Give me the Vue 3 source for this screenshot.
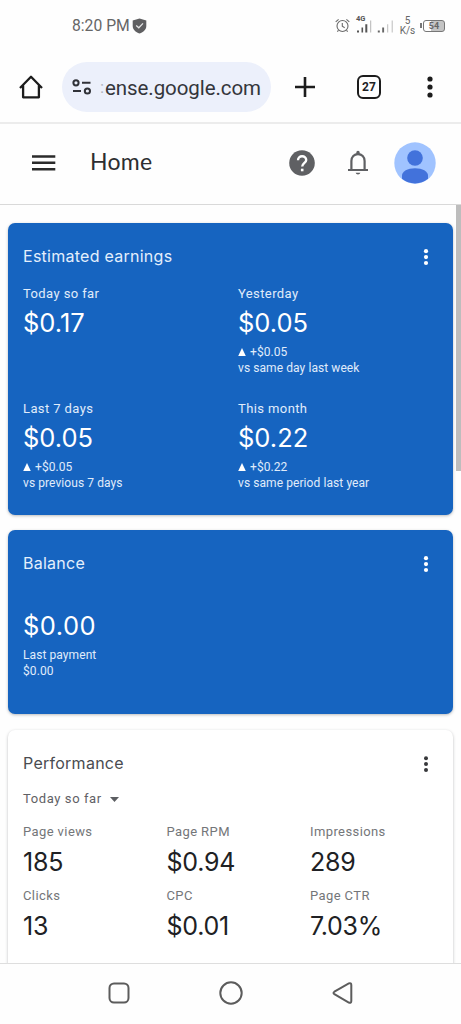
<script setup>
const earnings = [
  { label: 'Today so far', value: '$0.17' },
  { label: 'Yesterday', value: '$0.05', delta: '+$0.05', note: 'vs same day last week' },
  { label: 'Last 7 days', value: '$0.05', delta: '+$0.05', note: 'vs previous 7 days' },
  { label: 'This month', value: '$0.22', delta: '+$0.22', note: 'vs same period last year' },
]
const metrics = [
  { label: 'Page views', value: '185' },
  { label: 'Page RPM', value: '$0.94' },
  { label: 'Impressions', value: '289' },
  { label: 'Clicks', value: '13' },
  { label: 'CPC', value: '$0.01' },
  { label: 'Page CTR', value: '7.03%' },
]
</script>

<template>
  <div class="phone">
    <div class="status">
      <span class="clock">8:20 PM</span>
      <svg class="shield" width="15" height="16" viewBox="0 0 15 16">
        <path d="M7.5 0.5 L14.3 2.6 V8 C14.3 11.5 11.5 14 7.5 15.5 C3.5 14 .7 11.5 .7 8 V2.6 Z" fill="#5f5f61" />
        <path d="M4.2 7.4 L6.8 9.8 L11 5.4" fill="none" stroke="#e4e4e4" stroke-width="1.3" />
      </svg>
      <svg class="alarm" width="15" height="15" viewBox="0 0 15 15" fill="none" stroke="#6a6a6a" stroke-width="1.1">
        <circle cx="7.5" cy="8" r="5.5" />
        <path d="M7.3 5 V8.3 L9.7 9.7 M.7 3.8 L3.6 1.3 M14.3 3.8 L11.4 1.3 M3.5 12.3 L2.3 13.7 M11.5 12.3 L12.7 13.7" />
      </svg>
      <div class="cell">
        <span class="lte">4G</span>
        <svg width="18" height="13" viewBox="0 0 18 13">
          <path d="M1 10.5h2v2H1zM5.5 7.5h1.6v5H5.5zM9.3 4.2h2v8.3h-2z" fill="#555" />
          <path d="M14.2 .5h1v12h-1z" fill="#b5b5b5" />
        </svg>
      </div>
      <svg class="sim2" width="17" height="13" viewBox="0 0 17 13">
        <path d="M.8 10.5h2v2h-2zM5.2 7.5h1.9v5H5.2z" fill="#666" />
        <path d="M10.2 4.2h1v8.3h-1zM14.7 .5h1v12h-1z" fill="#bcbcbc" />
      </svg>
      <div class="speed"><span>5</span><span>K/s</span></div>
      <div class="battery"><i></i><b>54</b></div>
    </div>

    <div class="browser">
      <svg class="home" width="24" height="24" viewBox="0 0 24 24" fill="none" stroke="#1c1c1c" stroke-width="2.3" stroke-linejoin="round">
        <path d="M1 13 L12 1.8 L23 13 M4.1 10.5 V22.3 H19.9 V10.5" />
      </svg>
      <div class="url">
        <svg width="20" height="16" viewBox="0 0 20 16" fill="none" stroke="#303238" stroke-width="2">
          <circle cx="4" cy="3.8" r="2.6" />
          <path d="M10 3.8 H18.5 M1 12 H9" />
          <circle cx="15.4" cy="12" r="2.6" />
        </svg>
        <span class="cut">:</span><span class="host">ense.google.com</span>
      </div>
      <svg class="plus" width="22" height="22" viewBox="0 0 22 22" stroke="#1c1c1c" stroke-width="2.6">
        <path d="M1 11 H21 M11 1 V21" />
      </svg>
      <div class="tabs">27</div>
      <svg class="menu" width="6" height="22" viewBox="0 0 6 22" fill="#1c1c1c">
        <circle cx="3" cy="3" r="2.6" /><circle cx="3" cy="11" r="2.6" /><circle cx="3" cy="19" r="2.6" />
      </svg>
    </div>

    <header class="appbar">
      <svg class="burger" width="24" height="16" viewBox="0 0 24 16" stroke="#2b2b2b" stroke-width="2.5">
        <path d="M0 1.4 H23.3 M0 7.8 H23.3 M0 14.2 H23.3" />
      </svg>
      <span class="page">Home</span>
      <svg class="help" width="26" height="26" viewBox="0 0 26 26">
        <circle cx="13" cy="13" r="12.8" fill="#5f6063" />
        <path d="M9 10.2 C9 7.8 10.8 6.2 13.1 6.2 C15.5 6.2 17.2 7.8 17.2 9.9 C17.2 12.7 13.2 13 13.2 16.6" fill="none" stroke="#fff" stroke-width="2.4" />
        <path d="M11.9 18.7h2.6v2.6h-2.6z" fill="#fff" />
      </svg>
      <svg class="bell" width="22" height="26" viewBox="0 0 22 26">
        <path d="M1 20 H21 M4.4 20 V11 C4.4 7 7.2 4.1 11 4.1 C14.8 4.1 17.6 7 17.6 11 V20" fill="none" stroke="#5f6063" stroke-width="2.2" />
        <path d="M9.3 4.3 V2.5 a1.7 1.7 0 0 1 3.4 0 V4.3z M8.6 22.8 H13.4 A2.5 2.3 0 0 1 8.6 22.8z" fill="#5f6063" />
      </svg>
      <svg class="avatar" width="42" height="42" viewBox="0 0 42 42">
        <circle cx="21" cy="21" r="20.7" fill="#a0c3ff" />
        <circle cx="21" cy="16" r="7.8" fill="#4272db" />
        <path d="M8 36.8 V33.5 C8 29.5 13.5 26.3 21 26.3 C28.5 26.3 34 29.5 34 33.5 V36.8 A20.7 20.7 0 0 1 8 36.8z" fill="#4272db" />
      </svg>
    </header>

    <main class="content">
      <section class="card blue earnings">
        <div class="head">
          <h2>Estimated earnings</h2>
          <svg width="6" height="18" viewBox="0 0 6 18" fill="#fff"><circle cx="3" cy="3.2" r="2.1" /><circle cx="3" cy="9.1" r="2.1" /><circle cx="3" cy="15" r="2.1" /></svg>
        </div>
        <div class="stats">
          <div v-for="s in earnings" :key="s.label">
            <div class="label">{{ s.label }}</div>
            <div class="value">{{ s.value }}</div>
            <template v-if="s.delta">
              <div class="small delta">
                <svg width="8" height="9" viewBox="0 0 8 9"><path d="M4 0 L7.8 8 H.2z" fill="#fff" /></svg>{{ s.delta }}
              </div>
              <div class="small">{{ s.note }}</div>
            </template>
          </div>
        </div>
      </section>

      <section class="card blue balance">
        <div class="head">
          <h2>Balance</h2>
          <svg width="6" height="18" viewBox="0 0 6 18" fill="#fff"><circle cx="3" cy="3.2" r="2.1" /><circle cx="3" cy="9.1" r="2.1" /><circle cx="3" cy="15" r="2.1" /></svg>
        </div>
        <div class="value total">$0.00</div>
        <div class="small">Last payment</div>
        <div class="small">$0.00</div>
      </section>

      <section class="card perf">
        <div class="head">
          <h2>Performance</h2>
          <svg width="6" height="18" viewBox="0 0 6 18" fill="#37383b"><circle cx="3" cy="3.2" r="2" /><circle cx="3" cy="9.1" r="2" /><circle cx="3" cy="15" r="2" /></svg>
        </div>
        <div class="range">
          Today so far
          <svg width="9" height="5" viewBox="0 0 9 5"><path d="M0 0 H9 L4.5 5z" fill="#5c5e62" /></svg>
        </div>
        <div class="metrics">
          <div v-for="m in metrics" :key="m.label">
            <div class="label">{{ m.label }}</div>
            <div class="value">{{ m.value }}</div>
          </div>
        </div>
      </section>
      <div class="scrollbar"></div>
    </main>

    <nav class="sysnav">
      <svg width="22" height="22" viewBox="0 0 22 22"><rect x="1.5" y="1.5" width="19" height="19" rx="4.5" /></svg>
      <svg width="24" height="24" viewBox="0 0 24 24"><circle cx="12" cy="12" r="10.7" /></svg>
      <svg width="22" height="22" viewBox="0 0 22 22"><path d="M2.4 9.7 L16.8 1.4 Q19.3 .6 19.3 3 V19 Q19.3 21.4 16.8 20.5 L2.4 12.2 Q.6 10.95 2.4 9.7z" /></svg>
    </nav>
  </div>
</template>

<style>
body { margin: 0; background: #fff; }
</style>

<style scoped>
.phone {
  width: 461px;
  height: 1024px;
  display: flex;
  flex-direction: column;
  overflow: hidden;
  background: #fefefe;
  font-family: Roboto, "Liberation Sans", sans-serif;
  color: #202124;
}
svg { display: block; flex: none; }

.status {
  height: 51px;
  flex: none;
  display: flex;
  align-items: center;
  padding-left: 72px;
  color: #666;
}
.clock { width: 57px; margin-right: 3px; font-size: 15.7px; white-space: nowrap; }
.alarm { margin-left: 188px; }
.cell { position: relative; margin-left: 6px; padding-top: 1px; }
.lte { position: absolute; left: 0; top: -4px; font-size: 7.5px; line-height: 8px; font-weight: 700; color: #555; }
.sim2 { margin-left: 3px; margin-top: 1px; }
.speed {
  width: 17px;
  margin-left: 5px;
  display: flex;
  flex-direction: column;
  align-items: center;
  font-size: 10px;
  line-height: 10px;
}
.battery { display: flex; align-items: center; margin-left: 4px; }
.battery i { width: 2px; height: 5px; background: #777; margin-right: 1px; }
.battery b {
  box-sizing: border-box;
  width: 22px;
  height: 12px;
  border: 1px solid #777;
  border-radius: 3px;
  background: linear-gradient(90deg, #fff 35%, #c4c4c4 35%);
  font-size: 9px;
  line-height: 10px;
  text-align: center;
  color: #666;
}

.browser {
  box-sizing: border-box;
  height: 73px;
  flex: none;
  display: flex;
  align-items: center;
  padding-left: 19px;
  border-bottom: 2px solid #ececec;
}
.url {
  width: 209px;
  height: 50px;
  margin-left: 19px;
  border-radius: 25px;
  background: #ecf0fb;
  display: flex;
  align-items: center;
}
.url svg { margin-left: 10px; }
.cut { width: 5px; margin-left: 8px; font-size: 17px; color: #b0b4bd; overflow: hidden; }
.host { padding-top: 2px; font-size: 20.5px; letter-spacing: -0.08px; color: #34363b; white-space: nowrap; }
.plus { margin-left: 23px; }
.tabs {
  box-sizing: border-box;
  width: 24px;
  height: 24px;
  margin-left: 41px;
  border: 2.5px solid #1c1c1c;
  border-radius: 6px;
  font-size: 12px;
  font-weight: 700;
  line-height: 20px;
  text-align: center;
}
.menu { margin-left: 46px; }

.appbar {
  box-sizing: border-box;
  height: 81px;
  flex: none;
  display: flex;
  align-items: center;
  padding: 0 0 2px 32px;
  border-bottom: 1px solid #d9d9d9;
}
.page { width: 199px; margin-left: 34px; padding-bottom: 4px; font-family: Lato, sans-serif; font-size: 23px; letter-spacing: 0.3px; color: #2d2e31; }
.bell { margin-left: 32px; }
.avatar { margin-left: 25px; }

.content { position: relative; flex: 1; min-height: 0; overflow: hidden; padding: 18px 8px 0; }
.scrollbar { position: absolute; right: 0; top: 0; width: 5px; height: 266px; background: #bdbdbd; }
.card {
  box-sizing: border-box;
  padding: 22px 0 0 15px;
  width: 445px;
  border-radius: 7px;
  background: #fff;
  box-shadow: 0 1px 3px rgba(60, 64, 67, 0.35);
}
.blue { background: #1664c0; color: #fff; }
.earnings { height: 292px; }
.balance { height: 184px; margin-top: 15px; }
.perf { height: 300px; margin-top: 16px; }
.head { display: flex; align-items: center; justify-content: space-between; height: 24px; padding-right: 24px; }
h2 { margin: 0; padding-bottom: 2px; font-family: Inter, sans-serif; font-size: 16px; font-weight: 400; letter-spacing: 0.26px; }
.blue h2 { color: #e4effc; }
.perf h2 { color: #4a4c50; }
.stats { display: grid; grid-template-columns: 215px 1fr; grid-auto-rows: 115px; margin-top: 17px; }
.label { font-size: 13px; line-height: 16px; letter-spacing: 0.4px; white-space: nowrap; }
.blue .label, .blue .small { color: #e0ecfb; }
.value { font-family: Inter, sans-serif; font-size: 25.5px; line-height: 30px; white-space: nowrap; }
.stats .value { margin: 6px 0 7px; }
.small { font-size: 12px; line-height: 15.5px; letter-spacing: 0.08px; white-space: nowrap; }
.delta { display: flex; align-items: center; gap: 4px; }
.total { margin: 35px 0 7px; letter-spacing: 0.5px; }
.range {
  display: flex;
  align-items: center;
  gap: 8px;
  margin-top: 15px;
  font-size: 13px;
  line-height: 16px;
  letter-spacing: 0.6px;
  color: #5f6165;
}
.metrics { display: grid; grid-template-columns: repeat(3, 143.5px); grid-auto-rows: 64px; margin-top: 17px; }
.metrics .label { color: #747679; }
.metrics .value { margin-top: 6.5px; font-size: 25px; letter-spacing: -0.25px; }

.sysnav {
  box-sizing: border-box;
  height: 61px;
  flex: none;
  display: flex;
  align-items: center;
  justify-content: space-between;
  padding: 0 107px 2px 108px;
  border-top: 1px solid #dedede;
}
.sysnav svg { fill: none; stroke: #5c5c5c; stroke-width: 2; }
</style>
